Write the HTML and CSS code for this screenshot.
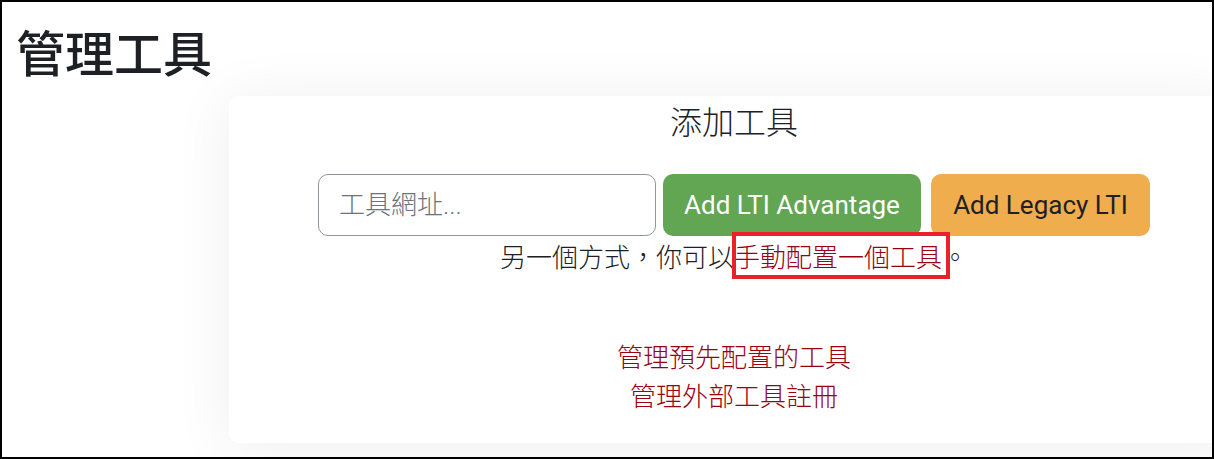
FILE: index.html
```html
<!DOCTYPE html>
<html lang="zh-Hant">
<head>
<meta charset="utf-8">
<title>管理工具</title>
<link rel="stylesheet" href="styles.css">
</head>
<body>
<div class="frame">
  <h2 class="page-title">管理工具</h2>
  <section class="card">
    <h3 class="card-title">添加工具</h3>
    <form class="add-row">
      <input class="url-input" type="text" placeholder="工具網址...">
      <button type="button" class="btn btn-green">Add LTI Advantage</button>
      <button type="button" class="btn btn-orange">Add Legacy LTI</button>
    </form>
    <p class="alt-line">另一個方式，你可以<a class="link highlight" href="#">手動配置一個工具</a>。</p>
    <div class="manage-links">
      <a class="link" href="#">管理預先配置的工具</a>
      <a class="link" href="#">管理外部工具註冊</a>
    </div>
  </section>
</div>
</body>
</html>
```
FILE: styles.css
```css
html, body {
  margin: 0;
  padding: 0;
  background: #fff;
}
body {
  font-family: Roboto, "Noto Sans CJK TC", sans-serif;
  color: #1d2125;
}
.frame {
  box-sizing: border-box;
  width: 1214px;
  height: 459px;
  border: 2px solid #000;
  overflow: hidden;
  padding: 19px 0 0 14px;
}
.page-title {
  margin: 0;
  font-family: "Noto Sans CJK TC", sans-serif;
  font-size: 49px;
  line-height: 59px;
  font-weight: 500;
  color: #1d2125;
}
.card {
  box-sizing: border-box;
  width: 1010px;
  height: 347px;
  margin: 16px 0 0 213px;
  background: #fff;
  border-radius: 9px;
  box-shadow: 0 4px 60px rgba(0, 0, 0, 0.07);
  padding-top: 5px;
  display: flex;
  flex-direction: column;
  align-items: center;
}
.card-title {
  margin: 0;
  font-family: "Noto Sans CJK TC", sans-serif;
  font-weight: 300;
  font-size: 32px;
  line-height: 38px;
  color: #1d2125;
}
.add-row {
  margin: 35px 0 0;
  display: flex;
  align-items: stretch;
  height: 62px;
}
.url-input {
  box-sizing: border-box;
  width: 338px;
  height: 62px;
  border: 1px solid #8f959e;
  border-radius: 10px;
  padding: 0 20px;
  font-family: Roboto, "Noto Sans CJK TC", sans-serif;
  font-weight: 300;
  font-size: 26px;
  color: #1d2125;
  outline: none;
}
.url-input::placeholder {
  color: #6a737b;
}
.btn {
  box-sizing: border-box;
  height: 62px;
  border: none;
  border-radius: 10px;
  padding: 0 21px;
  font-family: Roboto, sans-serif;
  font-size: 26px;
  font-weight: 400;
  cursor: pointer;
}
.btn-green {
  margin-left: 7px;
  width: 258px;
  background: #62a552;
  color: #fff;
}
.btn-orange {
  margin-left: 10px;
  width: 219px;
  background: #f0ad4e;
  color: #1d2125;
}
.alt-line {
  margin: 0;
  font-family: "Noto Sans CJK TC", sans-serif;
  font-weight: 300;
  font-size: 26px;
  line-height: 39px;
  color: #1d2125;
}
.link {
  color: #990011;
  text-decoration: none;
  font-family: "Noto Sans CJK TC", sans-serif;
  font-weight: 300;
}
.highlight {
  position: relative;
  display: inline-block;
}
.highlight::after {
  content: "";
  position: absolute;
  top: -4px;
  bottom: -4px;
  left: -2px;
  right: -8px;
  border: 4px solid #e8212b;
}
.manage-links {
  margin-top: 61px;
  display: flex;
  flex-direction: column;
  align-items: center;
  font-size: 26px;
  line-height: 39px;
}
```
